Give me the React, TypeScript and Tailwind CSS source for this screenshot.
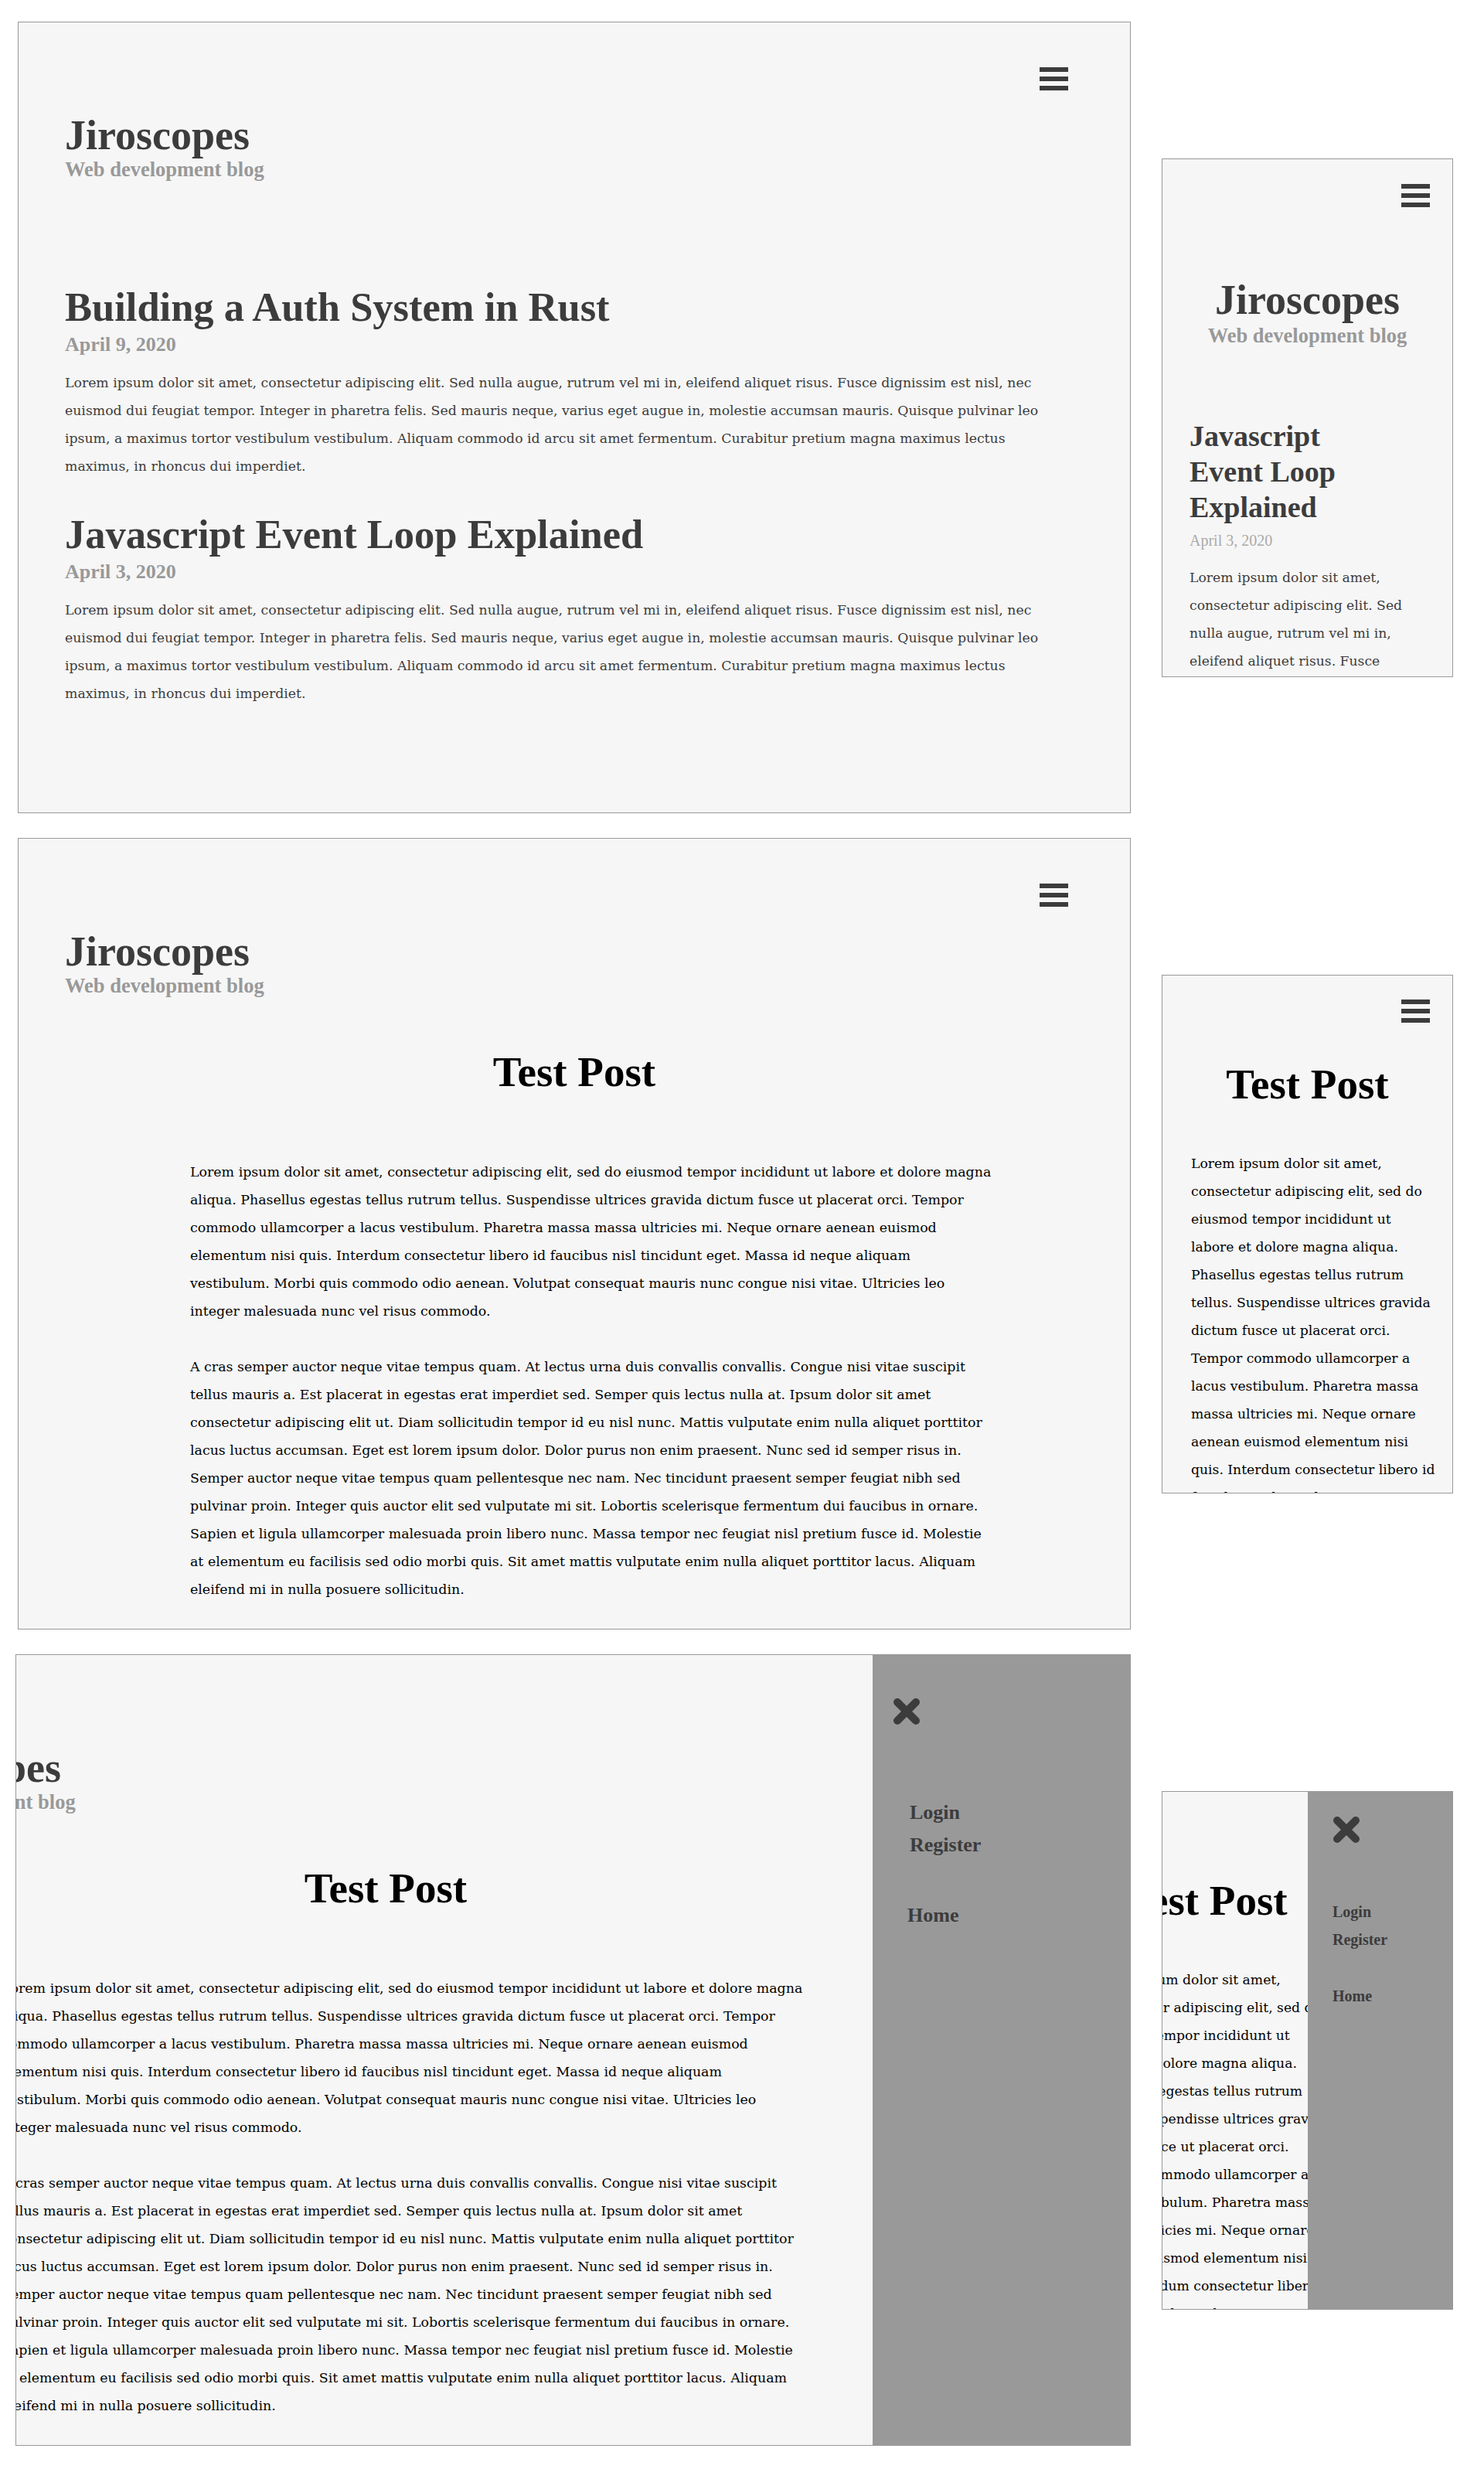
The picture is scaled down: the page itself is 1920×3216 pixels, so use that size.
import React from "react";

const HEAD = "font-['Liberation_Serif','Times_New_Roman',serif]";
const BODY = "font-['DejaVu_Serif','Liberation_Serif',serif]";

const postLines = [
  "Lorem ipsum dolor sit amet, consectetur adipiscing elit. Sed nulla augue, rutrum vel mi in, eleifend aliquet risus. Fusce dignissim est nisl, nec",
  "euismod dui feugiat tempor. Integer in pharetra felis. Sed mauris neque, varius eget augue in, molestie accumsan mauris. Quisque pulvinar leo",
  "ipsum, a maximus tortor vestibulum vestibulum. Aliquam commodo id arcu sit amet fermentum. Curabitur pretium magna maximus lectus",
  "maximus, in rhoncus dui imperdiet.",
];

const testP1 = [
  "Lorem ipsum dolor sit amet, consectetur adipiscing elit, sed do eiusmod tempor incididunt ut labore et dolore magna",
  "aliqua. Phasellus egestas tellus rutrum tellus. Suspendisse ultrices gravida dictum fusce ut placerat orci. Tempor",
  "commodo ullamcorper a lacus vestibulum. Pharetra massa massa ultricies mi. Neque ornare aenean euismod",
  "elementum nisi quis. Interdum consectetur libero id faucibus nisl tincidunt eget. Massa id neque aliquam",
  "vestibulum. Morbi quis commodo odio aenean. Volutpat consequat mauris nunc congue nisi vitae. Ultricies leo",
  "integer malesuada nunc vel risus commodo.",
];

const testP2 = [
  "A cras semper auctor neque vitae tempus quam. At lectus urna duis convallis convallis. Congue nisi vitae suscipit",
  "tellus mauris a. Est placerat in egestas erat imperdiet sed. Semper quis lectus nulla at. Ipsum dolor sit amet",
  "consectetur adipiscing elit ut. Diam sollicitudin tempor id eu nisl nunc. Mattis vulputate enim nulla aliquet porttitor",
  "lacus luctus accumsan. Eget est lorem ipsum dolor. Dolor purus non enim praesent. Nunc sed id semper risus in.",
  "Semper auctor neque vitae tempus quam pellentesque nec nam. Nec tincidunt praesent semper feugiat nibh sed",
  "pulvinar proin. Integer quis auctor elit sed vulputate mi sit. Lobortis scelerisque fermentum dui faucibus in ornare.",
  "Sapien et ligula ullamcorper malesuada proin libero nunc. Massa tempor nec feugiat nisl pretium fusce id. Molestie",
  "at elementum eu facilisis sed odio morbi quis. Sit amet mattis vulputate enim nulla aliquet porttitor lacus. Aliquam",
  "eleifend mi in nulla posuere sollicitudin.",
];

const mobilePostLines = [
  "Lorem ipsum dolor sit amet,",
  "consectetur adipiscing elit. Sed",
  "nulla augue, rutrum vel mi in,",
  "eleifend aliquet risus. Fusce",
];

const mobileTestLines = [
  "Lorem ipsum dolor sit amet,",
  "consectetur adipiscing elit, sed do",
  "eiusmod tempor incididunt ut",
  "labore et dolore magna aliqua.",
  "Phasellus egestas tellus rutrum",
  "tellus. Suspendisse ultrices gravida",
  "dictum fusce ut placerat orci.",
  "Tempor commodo ullamcorper a",
  "lacus vestibulum. Pharetra massa",
  "massa ultricies mi. Neque ornare",
  "aenean euismod elementum nisi",
  "quis. Interdum consectetur libero id",
  "faucibus nisl tincidunt eget.",
];

function Lines({ lines }: { lines: string[] }) {
  return (
    <>
      {lines.map((l, i) => (
        <span key={i} className="block whitespace-nowrap">
          {l}
        </span>
      ))}
    </>
  );
}

function Hamburger({ hidden }: { hidden?: boolean }) {
  return (
    <div className={hidden ? "invisible flex w-[37px] flex-col gap-[6px]" : "flex w-[37px] flex-col gap-[6px]"}>
      <span className="block h-[6px] bg-[#3c3c3c]" />
      <span className="block h-[6px] bg-[#3c3c3c]" />
      <span className="block h-[6px] bg-[#3c3c3c]" />
    </div>
  );
}

function CloseIcon() {
  return (
    <svg width="38" height="38" viewBox="0 0 38 38" className="block">
      <path
        d="M7 7 L31 31 M31 7 L7 31"
        stroke="#3c3c3c"
        strokeWidth="10"
        strokeLinecap="round"
        fill="none"
      />
    </svg>
  );
}

function DesktopHeader({ menuOpen }: { menuOpen?: boolean }) {
  return (
    <>
      <div className="flex justify-end pr-[20px] pt-[58px]">
        <Hamburger hidden={menuOpen} />
      </div>
      <div className={`${HEAD} mt-[29px] text-[54px] font-bold leading-[58px] text-[#3c3c3c]`}>
        Jiroscopes
      </div>
      <div className={`${HEAD} text-[26.5px] font-bold leading-[30px] text-[#999999]`}>
        Web development blog
      </div>
    </>
  );
}

function DesktopPost({ title, date, className }: { title: string; date: string; className: string }) {
  return (
    <article className={className}>
      <h2 className={`${HEAD} text-[52.5px] font-bold leading-[60px] text-[#3c3c3c]`}>{title}</h2>
      <div className={`${HEAD} mt-[3px] text-[26px] font-bold leading-[32px] text-[#999999]`}>{date}</div>
      <div className={`${BODY} mt-[15px] text-[17.3px] leading-[36px] text-[#3c3c3c]`}>
        <Lines lines={postLines} />
      </div>
    </article>
  );
}

function DesktopTestPostContent({ menuOpen }: { menuOpen?: boolean }) {
  return (
    <div className="px-[60px]">
      <DesktopHeader menuOpen={menuOpen} />
      <h1 className={`${HEAD} mt-[67px] text-center text-[55px] font-bold leading-[60px] text-black`}>
        Test Post
      </h1>
      <div className={`${BODY} ml-[162px] mt-[81px] text-[17.4px] leading-[36px] text-black`}>
        <p>
          <Lines lines={testP1} />
        </p>
        <p className="mt-[36px]">
          <Lines lines={testP2} />
        </p>
      </div>
    </div>
  );
}

function MobileTestPostContent({ menuOpen }: { menuOpen?: boolean }) {
  return (
    <>
      <div className="flex justify-end pr-[29px] pt-[31px]">
        <Hamburger hidden={menuOpen} />
      </div>
      <h1 className={`${HEAD} mt-[50px] text-center text-[55px] font-bold leading-[60px] text-black`}>
        Test Post
      </h1>
      <div className={`${BODY} mt-[54px] pl-[37px] text-[17.2px] leading-[36px] text-black`}>
        <Lines lines={mobileTestLines} />
      </div>
    </>
  );
}

function DesktopMenu() {
  return (
    <div className="absolute inset-y-0 right-0 w-[334px] bg-[#999999]">
      <div className="pl-[25px] pt-[55px]">
        <CloseIcon />
      </div>
      <div className={`${HEAD} mt-[91px] pl-[48px] text-[26px] font-bold leading-[42px] text-[#3c3c3c]`}>
        <div>Login</div>
        <div>Register</div>
      </div>
      <div className={`${HEAD} mt-[49px] pl-[45px] text-[26px] font-bold leading-[42px] text-[#3c3c3c]`}>
        Home
      </div>
    </div>
  );
}

function MobileMenu() {
  return (
    <div className="absolute inset-y-0 right-0 w-[188px] bg-[#999999]">
      <div className="pl-[31px] pt-[31px]">
        <CloseIcon />
      </div>
      <div className={`${HEAD} mt-[69px] pl-[32px] text-[20px] font-bold leading-[36px] text-[#3c3c3c]`}>
        <div>Login</div>
        <div>Register</div>
      </div>
      <div className={`${HEAD} mt-[37px] pl-[32px] text-[20px] font-bold leading-[36px] text-[#3c3c3c]`}>
        Home
      </div>
    </div>
  );
}

const DESKTOP = "relative h-[1024px] w-[1440px] shrink-0 overflow-hidden border border-[#999999] bg-[#f6f6f6]";
const PHONE = "relative h-[671px] w-[377px] shrink-0 overflow-hidden border border-[#999999] bg-[#f6f6f6]";

export default function App() {
  return (
    <div className="min-h-[3216px] w-full bg-white pl-[23px] pt-[28px]">
      <div className="flex flex-col gap-[32px]">
        {/* Row 1: blog index */}
        <div className="flex items-center gap-[40px]">
          <div className={DESKTOP}>
            <div className="px-[60px]">
              <DesktopHeader />
              <DesktopPost
                className="mt-[133px]"
                title="Building a Auth System in Rust"
                date="April 9, 2020"
              />
              <DesktopPost
                className="mt-[40px]"
                title="Javascript Event Loop Explained"
                date="April 3, 2020"
              />
            </div>
          </div>
          <div className={PHONE}>
            <div className="flex justify-end pr-[29px] pt-[32px]">
              <Hamburger />
            </div>
            <div className={`${HEAD} mt-[91px] text-center text-[54px] font-bold leading-[58px] text-[#3c3c3c]`}>
              Jiroscopes
            </div>
            <div className={`${HEAD} mt-[2px] text-center text-[26.5px] font-bold leading-[30px] text-[#999999]`}>
              Web development blog
            </div>
            <article className="mt-[92px] px-[35px]">
              <h2 className={`${HEAD} text-[38px] font-bold leading-[46px] text-[#3c3c3c]`}>
                <span className="block">Javascript</span>
                <span className="block">Event Loop</span>
                <span className="block">Explained</span>
              </h2>
              <div className={`${HEAD} mt-[7px] text-[20px] leading-[26px] text-[#aaaaaa]`}>April 3, 2020</div>
              <div className={`${BODY} mt-[17px] text-[17.2px] leading-[36px] text-[#3c3c3c]`}>
                <Lines lines={mobilePostLines} />
              </div>
            </article>
          </div>
        </div>

        {/* Row 2: post page */}
        <div className="flex items-center gap-[40px]">
          <div className={DESKTOP}>
            <DesktopTestPostContent />
          </div>
          <div className={PHONE}>
            <MobileTestPostContent />
          </div>
        </div>

        {/* Row 3: post page with menu open */}
        <div className="flex items-center gap-[40px]">
          <div className="relative ml-[-3px] h-[1024px] w-[1443px] shrink-0">
            <div className="h-full w-full overflow-hidden border border-[#999999] bg-[#f6f6f6]">
              <div className="ml-[-241px] w-[1438px]">
                <DesktopTestPostContent menuOpen />
              </div>
            </div>
            <DesktopMenu />
          </div>
          <div className="relative h-[671px] w-[377px] shrink-0">
            <div className="h-full w-full overflow-hidden border border-[#999999] bg-[#f6f6f6]">
              <div className="ml-[-131px] w-[375px]">
                <MobileTestPostContent menuOpen />
              </div>
            </div>
            <MobileMenu />
          </div>
        </div>
      </div>
    </div>
  );
}
